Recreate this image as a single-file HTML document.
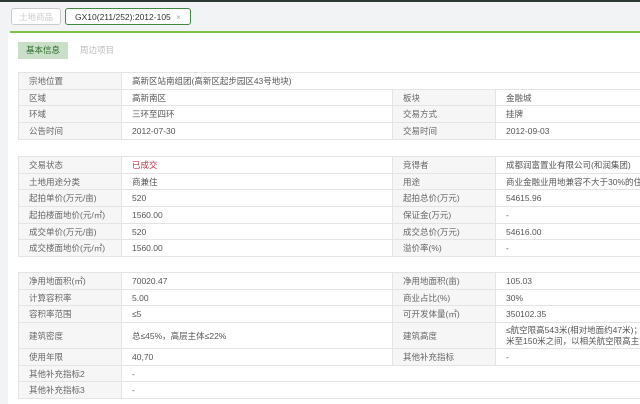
<!DOCTYPE html><html><head><meta charset="utf-8"><style>
body{margin:0;width:640px;height:404px;overflow:hidden;background:#f2f3f4;font-family:"Liberation Sans","Noto Sans CJK SC",sans-serif;font-size:8.5px;color:#555;position:relative}
.top{position:absolute;left:0;top:0;width:640px;height:2px;background:#2d3a33}
.tab{position:absolute;top:8px;height:17px;border:1px solid #ccc;border-radius:3px;background:#fff;line-height:16px;font-size:8.5px;box-sizing:border-box}
.gl{position:absolute;left:10px;top:31px;width:630px;height:2px;background:#7cc243}
.panel{position:absolute;left:8px;top:33px;width:632px;height:371px;background:#fff}
.b1{position:absolute;left:18px;top:42px;width:50px;height:17px;background:#c9dfc7;color:#2b6a2b;line-height:17px;text-align:center}
.b2{position:absolute;left:80px;top:42px;line-height:17px;color:#bbb}
table{position:absolute;left:18px;border-collapse:collapse;width:640px;table-layout:fixed}
td{height:16.7px;padding:0 0 0 10px;border:1px solid #e4e4e4;white-space:nowrap;overflow:hidden;line-height:10px;box-sizing:border-box}
td.l{background:#f6f6f6;color:#666}
</style></head><body>
<div class="top"></div>
<div class="panel"></div>
<div class="tab" style="left:11px;width:50px;color:#ccc;text-align:center">土地商品</div>
<div class="tab" style="left:65px;width:126px;border-color:#3f8a3f;color:#333;padding-left:9px">GX10(211/252):2012-105 <span style="color:#aaa;margin-left:3px">×</span></div>
<div class="gl"></div>
<div class="b1">基本信息</div><div class="b2">周边项目</div>
<table style="top:72px"><colgroup><col width="103"><col width="271"><col width="103"><col width="163"></colgroup>
<tr><td class="l">宗地位置</td><td colspan="3">高新区站南组团(高新区起步园区43号地块)</td></tr>
<tr><td class="l">区域</td><td>高新南区</td><td class="l">板块</td><td>金融城</td></tr>
<tr><td class="l">环域</td><td>三环至四环</td><td class="l">交易方式</td><td>挂牌</td></tr>
<tr><td class="l">公告时间</td><td>2012-07-30</td><td class="l">交易时间</td><td>2012-09-03</td></tr></table>
<table style="top:156px"><colgroup><col width="103"><col width="271"><col width="103"><col width="163"></colgroup>
<tr><td class="l">交易状态</td><td style="color:#c0324a">已成交</td><td class="l">竞得者</td><td>成都润富置业有限公司(和润集团)</td></tr>
<tr><td class="l">土地用途分类</td><td>商兼住</td><td class="l">用途</td><td>商业金融业用地兼容不大于30%的住宅</td></tr>
<tr><td class="l">起拍单价(万元/亩)</td><td>520</td><td class="l">起拍总价(万元)</td><td>54615.96</td></tr>
<tr><td class="l">起拍楼面地价(元/㎡)</td><td>1560.00</td><td class="l">保证金(万元)</td><td>-</td></tr>
<tr><td class="l">成交单价(万元/亩)</td><td>520</td><td class="l">成交总价(万元)</td><td>54616.00</td></tr>
<tr><td class="l">成交楼面地价(元/㎡)</td><td>1560.00</td><td class="l">溢价率(%)</td><td>-</td></tr></table>
<table style="top:272px"><colgroup><col width="103"><col width="271"><col width="103"><col width="163"></colgroup>
<tr><td class="l">净用地面积(㎡)</td><td>70020.47</td><td class="l">净用地面积(亩)</td><td>105.03</td></tr>
<tr><td class="l">计算容积率</td><td>5.00</td><td class="l">商业占比(%)</td><td>30%</td></tr>
<tr><td class="l">容积率范围</td><td>≤5</td><td class="l">可开发体量(㎡)</td><td>350102.35</td></tr>
<tr><td class="l" style="height:26px">建筑密度</td><td>总≤45%，高层主体≤22%</td><td class="l">建筑高度</td><td style="line-height:11px">≤航空限高543米(相对地面约47米)；规<br>米至150米之间，以相关航空限高主管</td></tr>
<tr><td class="l">使用年限</td><td>40,70</td><td class="l">其他补充指标</td><td>-</td></tr>
<tr><td class="l">其他补充指标2</td><td colspan="3">-</td></tr>
<tr><td class="l">其他补充指标3</td><td colspan="3">-</td></tr></table>
</body></html>
